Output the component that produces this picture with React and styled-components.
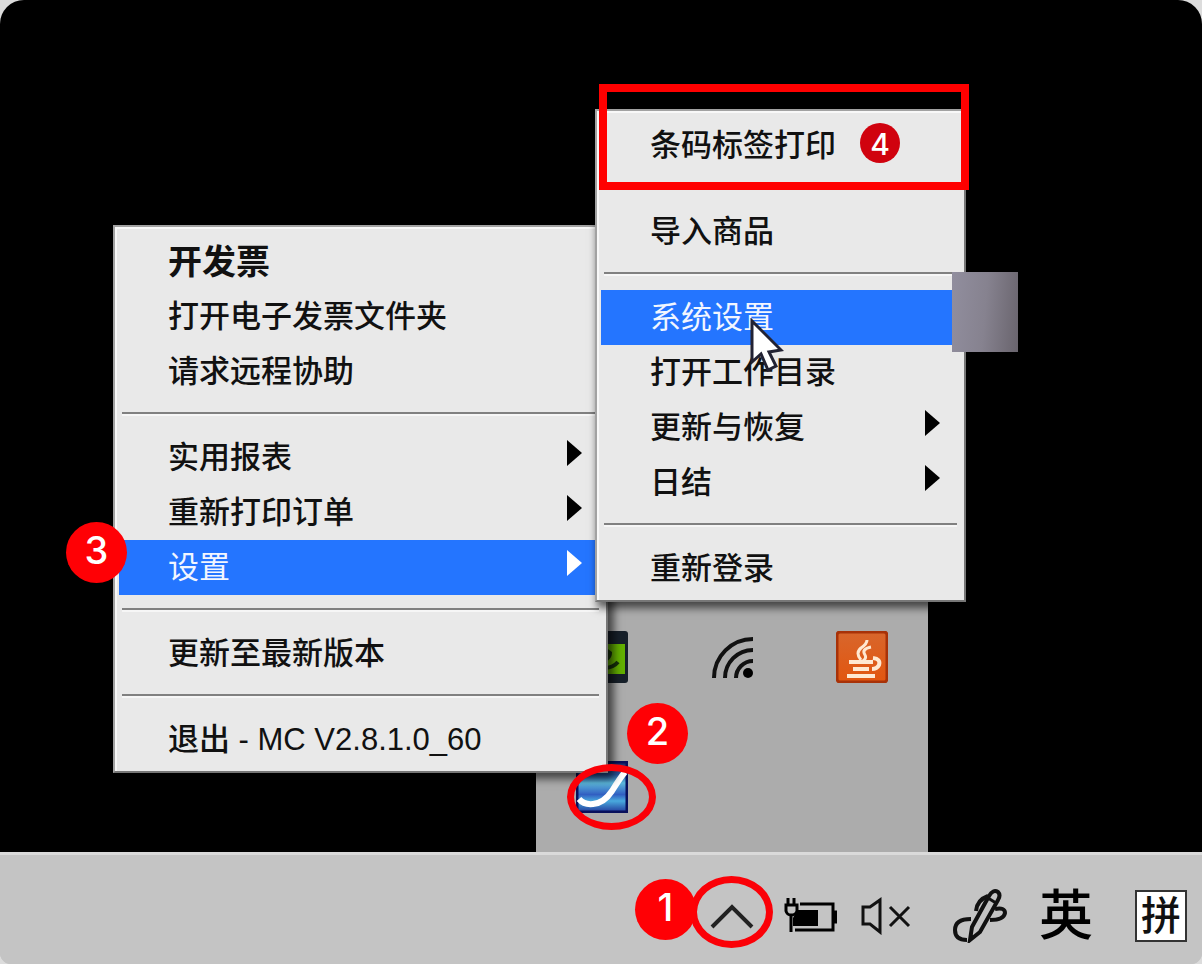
import React from "react";
import styled, { createGlobalStyle } from "styled-components";

const GlobalStyle = createGlobalStyle`
	* {
		box-sizing: border-box;
	}
	body {
		margin: 0;
		background: #dcdcdc;
		font-family: "Liberation Sans", "Noto Sans CJK SC", sans-serif;
	}
	button {
		margin: 0;
		padding: 0;
		border: 0;
		background: none;
		color: inherit;
		font: inherit;
	}
	svg {
		display: block;
	}
`;

const Screen = styled.div`
	display: flex;
	flex-direction: column;
	min-height: 100vh;
	overflow: hidden;
	border-radius: 24px 24px 11px 11px;
	background: #c4c4c4;
`;

const Desktop = styled.main`
	position: relative;
	flex: 1;
	min-height: 780px;
	background: #000;
`;

/* floating windows, anchored to the tray corner */
const Tray = styled.section`
	position: absolute;
	right: 274px;
	bottom: 0;
	display: grid;
	grid-template-columns: repeat(3, 130px);
	grid-auto-rows: 130px;
	padding: 0 1px;
	background: #acacac;
`;

const TrayButton = styled.button`
	display: flex;
	align-items: center;
	justify-content: center;
`;

const Menu = styled.ul`
	position: absolute;
	right: ${({ $right }) => $right}px;
	bottom: ${({ $bottom }) => $bottom}px;
	width: ${({ $width }) => $width}px;
	margin: 0;
	padding: 7px 4px 4px;
	border: 2px solid;
	border-color: #a2a2a2 #777 #777 #a2a2a2;
	background: #e9e9e9;
	box-shadow: inset 2px 2px #f8f8f8, 4px 4px 8px 2px rgba(0, 0, 0, 0.6);
	list-style: none;
`;

const Item = styled.button`
	display: flex;
	align-items: center;
	justify-content: space-between;
	width: 100%;
	height: 55px;
	padding: 0 20px 0 49px;
	background: ${({ $active }) => ($active ? "#2475ff" : "transparent")};
	color: ${({ $active }) => ($active ? "#f2f6ff" : "#111")};
	font-size: ${({ $strong }) => ($strong ? 34 : 31)}px;
	font-weight: ${({ $strong, $active }) => ($strong ? 700 : $active ? 400 : 500)};
	line-height: 40px;
	white-space: nowrap;
`;

const Arrow = styled.svg`
	margin-bottom: 10px;
	fill: ${({ $active }) => ($active ? "#fff" : "#000")};
`;

const Separator = styled.li`
	height: 2px;
	margin: 13px 3px 16px;
	background: #808080;
	box-shadow: 0 2px #f6f6f6;
`;

const Patch = styled.div`
	position: absolute;
	right: 184px;
	bottom: 500px;
	width: 66px;
	height: 80px;
	background: linear-gradient(95deg, #918e9e, #86828f 50%, #69646d);
`;

const Cursor = styled.svg`
	position: absolute;
	right: 418px;
	bottom: 478px;
`;

/* numbered marks over the windows */
const Badge = styled.span`
	position: absolute;
	right: ${({ $right }) => $right}px;
	bottom: ${({ $bottom }) => $bottom}px;
	display: flex;
	justify-content: center;
	width: ${({ $small }) => ($small ? 40 : 61)}px;
	height: ${({ $small }) => ($small ? 40 : 61)}px;
	border-radius: 50%;
	background: ${({ $small }) => ($small ? "#d0020e" : "#ff0005")};
	color: #fff;
	font-family: Inter, sans-serif;
	font-size: ${({ $small }) => ($small ? 30 : 38)}px;
	font-weight: 500;
	line-height: ${({ $small }) => ($small ? 42 : 56)}px;
`;

const Ring = styled.span`
	position: absolute;
	right: ${({ $right }) => $right}px;
	bottom: ${({ $bottom }) => $bottom}px;
	width: ${({ $width }) => $width}px;
	height: ${({ $height }) => $height}px;
	border: 7px solid #fb0007;
	border-radius: 50%;
`;

const Frame = styled.div`
	position: absolute;
	right: 233px;
	bottom: 662px;
	width: 370px;
	height: 106px;
	border: 8px solid #f00;
	pointer-events: none;
`;

const Taskbar = styled.footer`
	display: flex;
	align-items: center;
	justify-content: flex-end;
	gap: 42px;
	height: 112px;
	padding: 13px 15px 0 0;
	border-top: 3px solid #dadada;
	background: #c4c4c4;
`;

const Group = styled.div`
	display: flex;
	align-items: center;
	gap: ${({ $gap }) => $gap}px;
`;

const ChevronButton = styled.button`
	position: relative;
	display: flex;
	justify-content: center;
	width: 56px;
`;

const Language = styled.button`
	font-size: 54px;
	font-weight: 500;
	line-height: 56px;
`;

const InputMode = styled.button`
	width: 52px;
	height: 52px;
	margin-left: 10px;
	border: 2px solid #333;
	background: #fff;
	color: #111;
	font-size: 40px;
	font-weight: 500;
	line-height: 46px;
`;

const mainMenu = [
	{ label: "开发票", strong: true },
	{ label: "打开电子发票文件夹" },
	{ label: "请求远程协助" },
	null,
	{ label: "实用报表", sub: true },
	{ label: "重新打印订单", sub: true },
	{ label: "设置", sub: true, active: true },
	null,
	{ label: "更新至最新版本" },
	null,
	{ label: "退出 - MC V2.8.1.0_60" }
];

const settingsMenu = [
	{ label: "条码标签打印" },
	null,
	{ label: "导入商品" },
	null,
	{ label: "系统设置", active: true },
	{ label: "打开工作目录" },
	{ label: "更新与恢复", sub: true },
	{ label: "日结", sub: true },
	null,
	{ label: "重新登录" }
];

const ContextMenu = ({ items, right, bottom, width }) => (
	<Menu $right={right} $bottom={bottom} $width={width}>
		{items.map((item, i) => item ? (
			<li key={i}>
				<Item type="button" $active={item.active} $strong={item.strong}>
					{item.label}
					{item.sub && (
						<Arrow $active={item.active} width="15" height="26" viewBox="0 0 15 26">
							<path d="M0 0L15 13L0 26Z" />
						</Arrow>
					)}
				</Item>
			</li>
		) : <Separator key={i} role="separator" />)}
	</Menu>
);

const GpuIcon = () => (
	<svg width="52" height="52" viewBox="0 0 52 52">
		<rect width="52" height="52" rx="3" fill="#17202a" />
		<rect x="5" y="13" width="44" height="30" fill="#63b000" />
		<path d="M8 28Q22 12 34 22Q34 29 20 33M28 37Q37 37 42 31" fill="none" stroke="#17320a" strokeWidth="4" />
	</svg>
);

const WifiIcon = () => (
	<svg width="42" height="42" viewBox="0 0 42 42" fill="none" stroke="#111" strokeWidth="4">
		<path d="M3 42A39 39 0 0 1 42 3M14 42A28 28 0 0 1 42 14M25 42A17 17 0 0 1 42 25" />
		<circle cx="37" cy="37" r="5" fill="#000" stroke="none" />
	</svg>
);

const JavaIcon = () => (
	<svg width="52" height="52" viewBox="0 0 52 52">
		<defs>
			<linearGradient id="java" x1="0" y1="0" x2="0" y2="1">
				<stop offset="0" stopColor="#d8662c" />
				<stop offset="1" stopColor="#e2560f" />
			</linearGradient>
		</defs>
		<rect x="1" y="1" width="50" height="50" rx="3" fill="url(#java)" stroke="#a83208" strokeWidth="3" />
		<g fill="none" stroke="#ffe9d2">
			<path d="M31 9Q31 13 25 17Q19 22 25 29M35 16Q25 18 29 24Q31 27 27 30" strokeWidth="3" />
			<path d="M13 31H37M17 38H33M11 45H39" strokeWidth="4" />
			<path d="M37 27Q45 28 43 34Q41 38 36 38" strokeWidth="4" />
		</g>
	</svg>
);

const AppIcon = () => (
	<svg width="52" height="52" viewBox="0 0 52 52">
		<defs>
			<linearGradient id="wave" x1="0" y1="0" x2="0" y2="1">
				<stop offset="0" stopColor="#182a68" />
				<stop offset="0.25" stopColor="#28549c" />
				<stop offset="0.42" stopColor="#5cb8dc" />
				<stop offset="0.65" stopColor="#315fc2" />
				<stop offset="0.78" stopColor="#49a9dd" />
				<stop offset="1" stopColor="#223b9c" />
			</linearGradient>
		</defs>
		<rect x="1" y="1" width="50" height="50" fill="url(#wave)" stroke="#08105c" strokeWidth="3" />
		<path d="M3 38Q8 44 17 43Q28 42 36 30Q44 17 49 11" fill="none" stroke="#fff" strokeWidth="6" />
	</svg>
);

const ChevronIcon = () => (
	<svg width="44" height="26" viewBox="0 0 44 26" fill="none" stroke="#222" strokeWidth="4">
		<path d="M2 24L22 4L42 24" />
	</svg>
);

const BatteryIcon = () => (
	<svg width="53" height="36" viewBox="0 0 53 36" fill="none" stroke="#000" strokeWidth="3">
		<path d="M16 6H49V32H11" />
		<path d="M49 14H52V24H49" fill="#000" />
		<path d="M13 12H34V28H9V20Z" fill="#000" stroke="none" />
		<path d="M4 0V7M10 0V7M2 7H13V13Q12 17 7 17Q3 17 2 13ZM7 17V34" fill="#c4c4c4" />
	</svg>
);

const SpeakerIcon = () => (
	<svg width="50" height="38" viewBox="0 0 50 38" fill="none" stroke="#111" strokeWidth="3">
		<path d="M2 10H9L19 3V35L9 27H2Z" />
		<path d="M29 10L48 29M48 10L29 29" />
	</svg>
);

const PenIcon = () => (
	<svg width="54" height="54" viewBox="0 0 54 54" fill="none" stroke="#111" strokeWidth="4">
		<path d="M18 30Q2 30 2 41Q2 51 14 51" />
		<path d="M42 20Q52 18 52 24Q51 31 37 31" />
		<path d="M23 22Q24 11 35 7" />
		<path d="M17 51L19 38L36 7Q40 0 45 3Q48 6 45 11L27 43Z" />
		<path d="M35 9L43 14" strokeWidth="3" />
	</svg>
);

const App = () => (
	<>
		<GlobalStyle />
		<Screen>
			<Desktop>
				<Tray>
					<TrayButton type="button" aria-label="GPU"><GpuIcon /></TrayButton>
					<TrayButton type="button" aria-label="Wi-Fi"><WifiIcon /></TrayButton>
					<TrayButton type="button" aria-label="Java"><JavaIcon /></TrayButton>
					<TrayButton type="button" aria-label="MC"><AppIcon /></TrayButton>
				</Tray>
				<ContextMenu items={mainMenu} right={594} bottom={79} width={495} />
				<ContextMenu items={settingsMenu} right={236} bottom={250} width={371} />
				<Patch />
				<Cursor width="34" height="56" viewBox="0 0 34 56">
					<path d="M2 3V44L11 36L18 52L26 48L19 34L31 32Z" fill="#fff" stroke="#222233" strokeWidth="3" />
				</Cursor>
				<Frame />
				<Badge $small $right={302} $bottom={689}>4</Badge>
				<Badge $right={1075} $bottom={269}>3</Badge>
				<Badge $right={514} $bottom={88}>2</Badge>
				<Ring $right={546} $bottom={22} $width={89} $height={66} />
			</Desktop>
			<Taskbar>
				<Group $gap={24}>
					<ChevronButton type="button" aria-label="Show hidden icons">
						<ChevronIcon />
						<Ring $right={-13} $bottom={-19} $width={83} $height={72} />
						<Badge $right={64} $bottom={-11}>1</Badge>
					</ChevronButton>
					<button type="button" aria-label="Battery"><BatteryIcon /></button>
					<button type="button" aria-label="Volume"><SpeakerIcon /></button>
				</Group>
				<Group $gap={32}>
					<button type="button" aria-label="Pen"><PenIcon /></button>
					<Language type="button">英</Language>
					<InputMode type="button">拼</InputMode>
				</Group>
			</Taskbar>
		</Screen>
	</>
);

export default App;
